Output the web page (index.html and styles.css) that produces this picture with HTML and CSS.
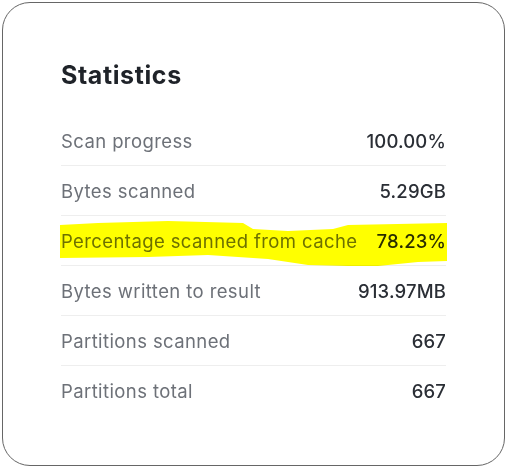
FILE: index.html
```html
<!DOCTYPE html>
<html>
<head>
<meta charset="utf-8">
<link rel="stylesheet" href="styles.css">
</head>
<body>
<div class="card">
  <h2 class="title">Statistics</h2>
  <div class="rows">
    <div class="row"><span class="label">Scan progress</span><span class="value">100.00%</span></div>
    <div class="row"><span class="label">Bytes scanned</span><span class="value">5.29GB</span></div>
    <div class="row hl">
      <span class="label">Percentage scanned from cache</span><span class="value">78.23%</span>
      <svg class="marker" viewBox="0 0 390 46" preserveAspectRatio="none" aria-hidden="true">
        <path d="M2 4 L40 2 L110 0 L185 2 L195 8 L230 10 L275 8 L290 4 L389 2 L389 40 L360 41 L320 45 L290 45 L250 44 L210 38 L150 34 L90 36 L2 37 Z" fill="#ffff00"/>
      </svg>
    </div>
    <div class="row"><span class="label">Bytes written to result</span><span class="value">913.97MB</span></div>
    <div class="row"><span class="label">Partitions scanned</span><span class="value">667</span></div>
    <div class="row last"><span class="label">Partitions total</span><span class="value">667</span></div>
  </div>
</div>
</body>
</html>
```
FILE: styles.css
```css
html, body {
  margin: 0;
  padding: 0;
  background: #ffffff;
}
body {
  font-family: Inter, "Noto Sans", sans-serif;
  padding: 2px;
  width: 507px;
  height: 468px;
  box-sizing: border-box;
}
.card {
  box-sizing: border-box;
  width: 503px;
  height: 464px;
  border: 1px solid #666666;
  border-radius: 28px;
  padding: 58px 58px 0 58px;
  background: #fff;
}
.title {
  margin: 0 0 27px 0;
  font-size: 25px;
  line-height: 28px;
  font-weight: 700;
  letter-spacing: 0.6px;
  color: #1f2329;
}
.rows {
  display: flex;
  flex-direction: column;
}
.row {
  position: relative;
  display: flex;
  justify-content: space-between;
  align-items: center;
  padding: 13px 0 12px 0;
  line-height: 24px;
  font-size: 18.5px;
  border-bottom: 1px solid #eeeeee;
}
.row.last {
  border-bottom: none;
}
.label {
  color: #6d7178;
  letter-spacing: 0.4px;
}
.value {
  color: #2a2e35;
  font-weight: 500;
  letter-spacing: 0.15px;
}
.marker {
  position: absolute;
  left: -3px;
  top: 5px;
  width: 390px;
  height: 46px;
  mix-blend-mode: multiply;
}
```
